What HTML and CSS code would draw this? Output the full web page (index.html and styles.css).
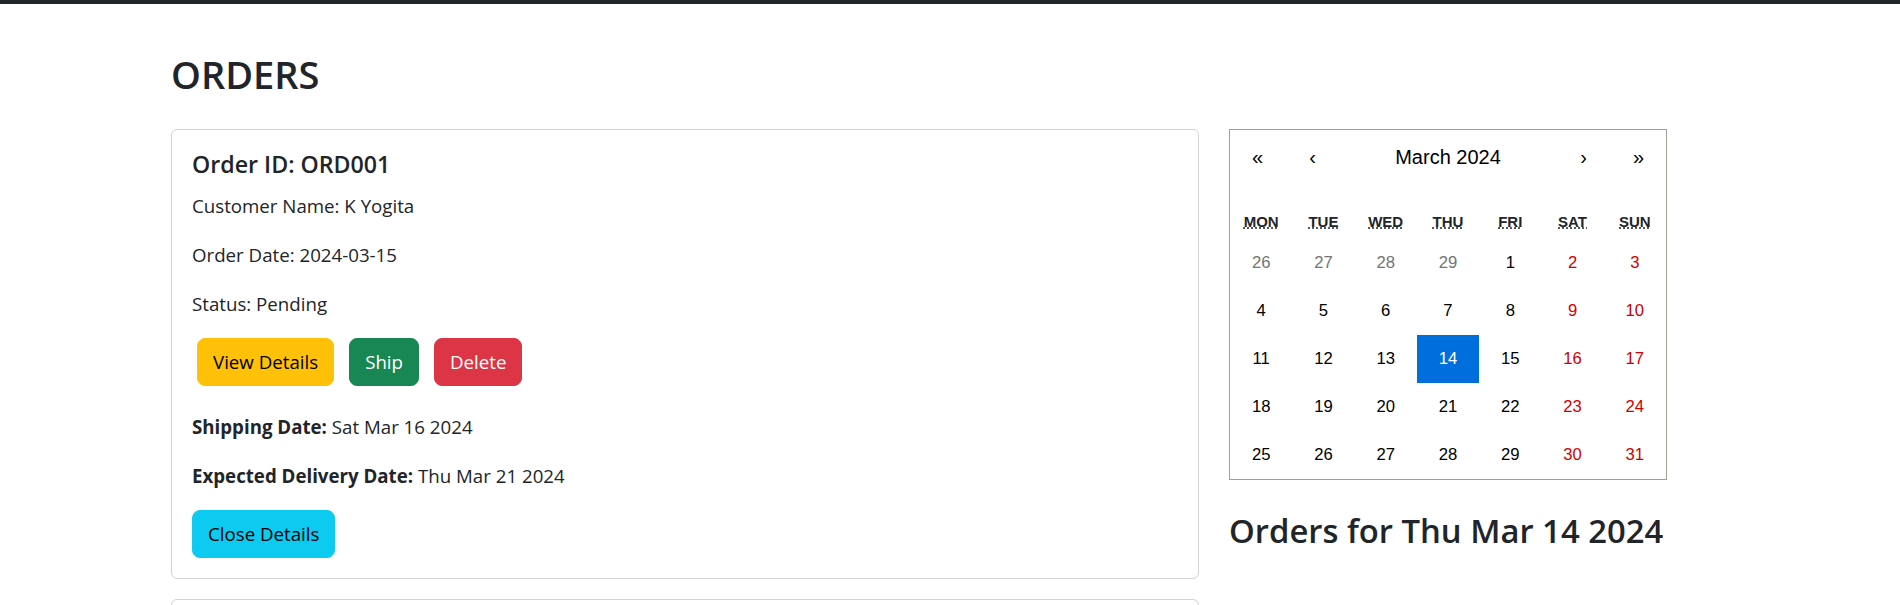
FILE: index.html
```html
<!DOCTYPE html>
<html lang="en">
<head>
<meta charset="utf-8">
<title>Orders</title>
<link rel="stylesheet" href="styles.css">
</head>
<body>
<div class="topbar"></div>
<main class="container">
  <h1 class="page-title">ORDERS</h1>
  <div class="layout">
    <section class="orders">
      <article class="card">
        <h4 class="card-title">Order ID: ORD001</h4>
        <p class="line">Customer Name: K Yogita</p>
        <p class="line">Order Date: 2024-03-15</p>
        <p class="line">Status: Pending</p>
        <div class="actions">
          <button class="btn btn-warning">View Details</button>
          <button class="btn btn-success">Ship</button>
          <button class="btn btn-danger">Delete</button>
        </div>
        <p class="line"><strong>Shipping Date:</strong> Sat Mar 16 2024</p>
        <p class="line"><strong>Expected Delivery Date:</strong> Thu Mar 21 2024</p>
        <button class="btn btn-info">Close Details</button>
      </article>
      <article class="card card-next">
        <h4 class="card-title">Order ID: ORD002</h4>
      </article>
    </section>
    <aside class="side">
      <div class="calendar">
        <div class="cal-nav">
          <button class="cal-arrow">«</button>
          <button class="cal-arrow">‹</button>
          <button class="cal-label">March 2024</button>
          <button class="cal-arrow">›</button>
          <button class="cal-arrow">»</button>
        </div>
        <div class="cal-weekdays">
          <div class="wd"><abbr title="Monday">Mon</abbr></div>
          <div class="wd"><abbr title="Tuesday">Tue</abbr></div>
          <div class="wd"><abbr title="Wednesday">Wed</abbr></div>
          <div class="wd"><abbr title="Thursday">Thu</abbr></div>
          <div class="wd"><abbr title="Friday">Fri</abbr></div>
          <div class="wd"><abbr title="Saturday">Sat</abbr></div>
          <div class="wd"><abbr title="Sunday">Sun</abbr></div>
        </div>
        <div class="cal-days">
          <button class="tile other">26</button>
          <button class="tile other">27</button>
          <button class="tile other">28</button>
          <button class="tile other">29</button>
          <button class="tile">1</button>
          <button class="tile weekend">2</button>
          <button class="tile weekend">3</button>
          <button class="tile">4</button>
          <button class="tile">5</button>
          <button class="tile">6</button>
          <button class="tile">7</button>
          <button class="tile">8</button>
          <button class="tile weekend">9</button>
          <button class="tile weekend">10</button>
          <button class="tile">11</button>
          <button class="tile">12</button>
          <button class="tile">13</button>
          <button class="tile active">14</button>
          <button class="tile">15</button>
          <button class="tile weekend">16</button>
          <button class="tile weekend">17</button>
          <button class="tile">18</button>
          <button class="tile">19</button>
          <button class="tile">20</button>
          <button class="tile">21</button>
          <button class="tile">22</button>
          <button class="tile weekend">23</button>
          <button class="tile weekend">24</button>
          <button class="tile">25</button>
          <button class="tile">26</button>
          <button class="tile">27</button>
          <button class="tile">28</button>
          <button class="tile">29</button>
          <button class="tile weekend">30</button>
          <button class="tile weekend">31</button>
        </div>
      </div>
      <h2 class="day-title">Orders for Thu Mar 14 2024</h2>
    </aside>
  </div>
</main>
</body>
</html>
```
FILE: styles.css
```css
* { box-sizing: border-box; }

html, body {
  margin: 0;
  padding: 0;
  background: #fff;
}

body {
  font-family: "Open Sans", "Noto Sans", sans-serif;
  color: #212529;
  font-size: 18.7px;
  line-height: 30px;
}

.topbar {
  height: 4px;
  background: #212529;
}

.container {
  max-width: 1558px;
  margin: 0 auto;
  padding-top: 48px;
}

.page-title {
  margin: 0 0 32px;
  font-size: 38px;
  line-height: 45px;
  font-weight: 600;
}

.layout {
  display: flex;
  align-items: flex-start;
  gap: 30px;
}

.orders {
  flex: 0 0 1028px;
  display: flex;
  flex-direction: column;
  gap: 20px;
}

.card {
  display: flex;
  flex-direction: column;
  align-items: flex-start;
  border: 1px solid #d3d3d3;
  border-radius: 6px;
  padding: 20px;
}

.card-next {
  min-height: 120px;
}

.card-title {
  margin: 0 0 12px;
  font-size: 23.2px;
  line-height: 28.6px;
  font-weight: 600;
}

.line {
  margin: 0 0 19px;
}

.line strong {
  font-weight: 700;
}

.actions {
  display: flex;
  gap: 15px;
  padding-left: 5px;
  margin: 0 0 26px;
}

.btn {
  display: inline-flex;
  align-items: center;
  height: 48px;
  padding: 0 15px;
  border: 1px solid transparent;
  border-radius: 8px;
  font-family: inherit;
  font-size: 18.7px;
  line-height: 30px;
  cursor: pointer;
}

.btn-warning { background: #ffc107; border-color: #ffc107; color: #000; }
.btn-success { background: #198754; border-color: #198754; color: #fff; }
.btn-danger  { background: #dc3545; border-color: #dc3545; color: #fff; }
.btn-info    { background: #0dcaf0; border-color: #0dcaf0; color: #000; }

.side {
  flex: 1;
}

.calendar {
  width: 438px;
  border: 1px solid #a0a096;
  background: #fff;
  font-family: "Liberation Sans", Arial, sans-serif;
  font-size: 20px;
  line-height: 1.125em;
}

.cal-nav {
  display: flex;
  height: 55px;
  margin-bottom: 20px;
}

.cal-nav button {
  min-width: 55px;
  background: none;
  border: 0;
  padding: 0;
  font: inherit;
  color: #000;
}

.cal-label {
  flex-grow: 1;
}

.cal-weekdays {
  display: grid;
  grid-template-columns: repeat(7, 1fr);
}

.wd {
  padding: 8.5px 0;
  text-align: center;
  text-transform: uppercase;
  font-size: 15px;
  font-weight: 700;
  line-height: 16.875px;
  color: #212529;
}

.wd abbr {
  text-decoration: underline dotted;
  cursor: help;
}

.cal-days {
  display: grid;
  grid-template-columns: repeat(7, 1fr);
}

.tile {
  height: 48px;
  padding: 0;
  border: 0;
  background: none;
  font-family: inherit;
  font-size: 16.67px;
  line-height: 16px;
  color: #000;
  text-align: center;
}

.tile.other { color: #757575; }
.tile.weekend { color: #d10000; }
.tile.active { background: #006edc; color: #fff; }

.day-title {
  margin: 31px 0 0;
  font-size: 32.8px;
  line-height: 40.8px;
  font-weight: 600;
}
```
